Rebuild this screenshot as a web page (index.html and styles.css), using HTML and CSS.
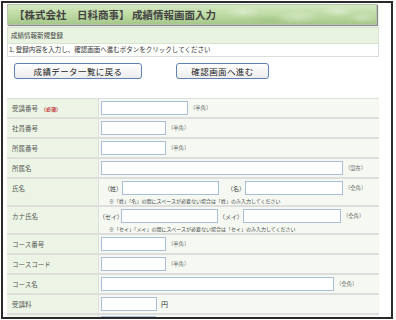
FILE: index.html
```html
<!DOCTYPE html>
<html lang="ja">
  <head>
    <meta charset="UTF-8" />
    <meta name="viewport" content="width=device-width, initial-scale=1.0" />
    <title>成績情報画面入力</title>
    <link rel="stylesheet" href="styles.css">
  </head>
  <body>
    <div class="frame">
      <div class="title">【株式会社　日科商事】 成績情報画面入力</div>
      <div class="sub">成績情報新規登録</div>
      <div class="guide">1. 登録内容を入力し、確認画面へ進むボタンをクリックしてください</div>

      <div class="buttons">
        <button class="btn btn-back">成績データ一覧に戻る</button>
        <button class="btn btn-next">確認画面へ進む</button>
      </div>

      <div class="form">
        <div class="row">
          <div class="label">受講番号<span class="required">（必須）</span></div>
          <div class="value">
            <input type="text" class="in in-m">
            <span class="note">（半角）</span>
          </div>
        </div>
        <div class="row">
          <div class="label">社員番号</div>
          <div class="value">
            <input type="text" class="in in-s">
            <span class="note">（半角）</span>
          </div>
        </div>
        <div class="row">
          <div class="label">所属番号</div>
          <div class="value">
            <input type="text" class="in in-s">
            <span class="note">（半角）</span>
          </div>
        </div>
        <div class="row">
          <div class="label">所属名</div>
          <div class="value">
            <input type="text" class="in in-l">
            <span class="note">（混在）</span>
          </div>
        </div>
        <div class="row row-tall">
          <div class="label">氏名</div>
          <div class="value value-name">
            <div class="name-line">
              <span class="pre pre-sei">（姓）</span>
              <input type="text" class="in in-name">
              <span class="pre pre-mei">（名）</span>
              <input type="text" class="in in-name2">
              <span class="note">（全角）</span>
            </div>
            <div class="hint">※「姓」「名」の間にスペースが必要ない場合は「姓」のみ入力してください</div>
          </div>
        </div>
        <div class="row row-tall">
          <div class="label">カナ氏名</div>
          <div class="value value-name">
            <div class="name-line">
              <span class="pre pre-kana">（セイ）</span>
              <input type="text" class="in in-name">
              <span class="pre pre-kana2">（メイ）</span>
              <input type="text" class="in in-name2">
              <span class="note">（全角）</span>
            </div>
            <div class="hint">※「セイ」「メイ」の間にスペースが必要ない場合は「セイ」のみ入力してください</div>
          </div>
        </div>
        <div class="row">
          <div class="label">コース番号</div>
          <div class="value">
            <input type="text" class="in in-s">
            <span class="note">（半角）</span>
          </div>
        </div>
        <div class="row">
          <div class="label">コースコード</div>
          <div class="value">
            <input type="text" class="in in-s">
            <span class="note">（半角）</span>
          </div>
        </div>
        <div class="row">
          <div class="label">コース名</div>
          <div class="value">
            <input type="text" class="in in-course">
            <span class="note">（全角）</span>
          </div>
        </div>
        <div class="row">
          <div class="label">受講料</div>
          <div class="value">
            <input type="text" class="in in-fee">
            <span class="yen">円</span>
          </div>
        </div>
        <div class="row row-last">
          <div class="label"></div>
          <div class="value">
            <div class="select"><span class="select-arrow"></span></div>
          </div>
        </div>
      </div>
    </div>
  </body>
</html>
```

FILE: styles.css
```css
* {
  margin: 0;
  padding: 0;
  box-sizing: border-box;
}

body {
  background-color: #fff;
  font-family: "Noto Sans CJK JP", "Noto Sans", sans-serif;
  color: #333;
}

.frame {
  margin: 1px 0 0 1px;
  width: 392px;
  height: 318px;
  border: 2px solid #2a2a2a;
  padding: 1px 12px 0 4px;
  overflow: hidden;
}

.title {
  height: 21px;
  line-height: 19px;
  padding-left: 6px;
  margin-right: 2px;
  font-size: 10.5px;
  font-weight: bold;
  color: #444;
  border: 1px solid #b6c4aa;
  background:
    radial-gradient(ellipse 18px 6px at 235px 7px, rgba(255, 255, 255, 0.35), transparent),
    radial-gradient(ellipse 22px 7px at 290px 12px, rgba(255, 255, 255, 0.3), transparent),
    radial-gradient(ellipse 16px 6px at 330px 6px, rgba(255, 255, 255, 0.35), transparent),
    radial-gradient(ellipse 14px 5px at 355px 13px, rgba(255, 255, 255, 0.3), transparent),
    radial-gradient(ellipse 20px 6px at 260px 15px, rgba(120, 170, 90, 0.2), transparent),
    linear-gradient(#d4e8c0, #bcd9a2 55%, #a6c88a);
  box-shadow: 1px 1px 1px #8a8a8a;
}

.sub {
  margin-top: 2px;
  height: 17px;
  line-height: 15px;
  padding-left: 3px;
  font-size: 6.5px;
  color: #444;
  background-color: #e8f3e1;
  border: 1px solid #d8e4cf;
}

.guide {
  height: 13px;
  line-height: 11px;
  padding-left: 1px;
  font-size: 6.5px;
  color: #333;
  border: 1px solid #dcdcdc;
  border-top: none;
}

.buttons {
  display: flex;
  gap: 34px;
  margin-top: 6px;
  padding-left: 7px;
}

.btn {
  height: 16px;
  border: 1px solid #5f82b4;
  border-radius: 3px;
  background: linear-gradient(#ffffff, #ececec);
  font-family: inherit;
  font-size: 8.5px;
  letter-spacing: 0.4px;
  color: #222;
  cursor: pointer;
}

.btn-back {
  width: 128px;
}

.btn-next {
  width: 93px;
}

.form {
  margin-top: 19px;
  border-top: 1px solid #dedede;
}

.row {
  display: grid;
  grid-template-columns: 92px 1fr;
  height: 20px;
  border-bottom: 2px solid #dedede;
}

.row-tall {
  height: 28px;
}

.label {
  padding: 4px 0 0 5px;
  font-size: 6.5px;
  color: #555;
  background-color: #ecf5e5;
  border-right: 1px solid #dedede;
}

.required {
  margin-left: 3px;
  font-size: 5px;
  font-weight: bold;
  color: #c03030;
}

.value {
  display: flex;
  align-items: center;
  padding-left: 2px;
  background-color: #f5f9f2;
}

.row-last .value {
  align-items: flex-start;
}

.value-name {
  flex-direction: column;
  align-items: flex-start;
  padding-left: 0;
  padding-top: 2px;
}

.name-line {
  display: flex;
  align-items: center;
}

.in {
  height: 14px;
  border: 1px solid #a8bedb;
  background-color: #fff;
}

.in-s {
  width: 65px;
}

.in-m {
  width: 87px;
}

.in-l {
  width: 242px;
}

.in-course {
  width: 233px;
}

.in-fee {
  width: 56px;
}

.in-name {
  width: 97px;
}

.in-name2 {
  width: 98px;
}

.note {
  margin-left: 2px;
  font-size: 5.3px;
  color: #666;
}

.yen {
  margin-left: 4px;
  font-size: 7px;
  color: #333;
}

.pre {
  font-size: 6px;
  color: #444;
  text-align: right;
}

.pre-sei {
  width: 23px;
}

.pre-mei {
  width: 26px;
}

.pre-kana {
  width: 22px;
}

.pre-kana2 {
  width: 25px;
}

.hint {
  margin: 2px 0 0 10px;
  font-size: 5px;
  color: #444;
  white-space: nowrap;
}

.select {
  position: relative;
  width: 55px;
  height: 14px;
  margin-top: 1px;
  border: 1px solid #a8bedb;
  background-color: #fff;
}

.select-arrow {
  position: absolute;
  top: 0;
  right: 0;
  width: 9px;
  height: 12px;
  background-color: #c5d6ee;
}
```
